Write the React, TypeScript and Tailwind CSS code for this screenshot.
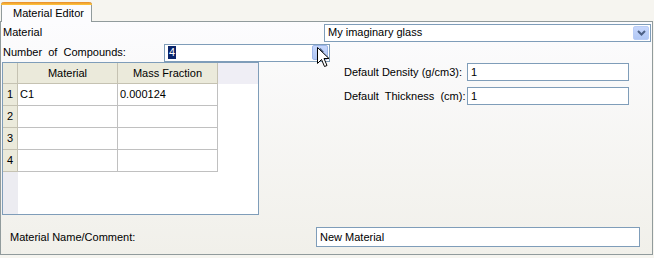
import React from "react";

const font = "font-['Tahoma','Liberation_Sans','DejaVu_Sans',sans-serif] text-[11px] leading-[13px] text-black";

const rows = [
  { n: "1", material: "C1", fraction: "0.000124" },
  { n: "2", material: "", fraction: "" },
  { n: "3", material: "", fraction: "" },
  { n: "4", material: "", fraction: "" },
];

const TextBox: React.FC<{ value: string; className?: string }> = ({ value, className }) => (
  <div
    className={`h-[18px] border border-[#7f9db9] bg-white px-[3px] flex items-center ${className ?? ""}`}
  >
    {value}
  </div>
);

const Cursor = () => (
  <svg width="13" height="21" viewBox="0 0 13 21" className="absolute left-[316px] top-[25px]">
    <path
      d="M0.5 0.5 L0.5 16.5 L4.5 12.5 L7.5 19.5 L10 18.5 L7 11.5 L12 11.5 Z"
      fill="white"
      stroke="black"
      strokeWidth="1"
      strokeLinejoin="miter"
    />
  </svg>
);

export default function App() {
  return (
    <div className={`${font} w-[654px] h-[258px] bg-[#f6f5f0] flex flex-col overflow-hidden`}>
      {/* tab strip */}
      <div className="h-[21px] flex items-end pl-[1px]">
        <div className="relative h-[20px] w-[91px] bg-[#fcfcfe] border-x border-[#919b9c] rounded-t-[3px] flex items-center pl-[11px] pt-[2px] -mb-px z-10">
          <div className="absolute -left-px -right-px top-0 h-[3px] rounded-t-[3px] bg-gradient-to-b from-[#e68b2c] to-[#ffc83c]" />
          Material Editor
        </div>
      </div>

      {/* page */}
      <div className="relative h-[234px] w-[653px] border border-[#919b9c] bg-gradient-to-b from-[#fcfcfe] to-[#f1f0ea] flex flex-col">
        {/* material row */}
        <div className="flex items-center h-[19px] mt-[1px] pl-[2px] pr-[1px]">
          <span>Material</span>
          <div className="ml-auto w-[327px] h-[18px] border border-[#7f9db9] bg-white flex items-center pl-[3px] pr-[1px]">
            <span className="flex-1">My imaginary glass</span>
            <div className="w-[16px] h-[14px] rounded-[2px] bg-gradient-to-b from-[#c7d7fc] to-[#b1c8f5] border border-[#b9cdf6] flex items-center justify-center">
              <svg width="9" height="6" viewBox="0 0 9 6">
                <path d="M1 1 L4.5 4.5 L8 1" fill="none" stroke="#4d6185" strokeWidth="2" />
              </svg>
            </div>
          </div>
        </div>

        {/* compounds row */}
        <div className="flex items-center h-[19px] mt-[1px] pl-[2px]">
          <span className="w-[161px] whitespace-pre">Number  of  Compounds:</span>
          <div className="w-[166px] h-[18px] border border-[#7f9db9] bg-white flex items-center pl-[3px] pr-[1px]">
            <span className="bg-[#0a246a] text-white px-[1px] leading-[13px]">4</span>
            <div className="ml-auto w-[16px] h-[15px] rounded-[2px] bg-gradient-to-b from-[#c7d7fc] to-[#aec5f4] border border-[#9db5e8] flex flex-col items-center justify-center gap-[2px]">
              <svg width="7" height="4" viewBox="0 0 7 4">
                <path d="M0 4 L3.5 0 L7 4 Z" fill="#4d6185" />
              </svg>
              <svg width="7" height="4" viewBox="0 0 7 4">
                <path d="M0 0 L3.5 4 L7 0 Z" fill="#4d6185" />
              </svg>
            </div>
          </div>
        </div>

        {/* grid + defaults */}
        <div className="flex">
          <div className="ml-[1px] w-[257px] h-[153px] border border-[#7f9db9] bg-white flex flex-col overflow-hidden">
            <div className="flex h-[21px] shrink-0">
              <div className="w-[15px] bg-[#ebeadb] border-r border-b border-[#c5c2b2]" />
              <div className="w-[100px] bg-[#ebeadb] border-r border-b border-[#c5c2b2] flex items-center justify-center">
                Material
              </div>
              <div className="w-[100px] bg-[#ebeadb] border-r border-b border-[#c5c2b2] flex items-center justify-center">
                Mass Fraction
              </div>
              <div className="flex-1 bg-[#efeef5]" />
            </div>
            {rows.map((r) => (
              <div key={r.n} className="flex h-[22px] shrink-0">
                <div className="w-[15px] bg-[#ebeadb] border-r border-b border-[#c5c2b2] flex items-center justify-center">
                  {r.n}
                </div>
                <div className="w-[100px] border-r border-b border-[#c0c0c0] flex items-center pl-[2px]">
                  {r.material}
                </div>
                <div className="w-[100px] border-r border-b border-[#c0c0c0] flex items-center pl-[2px]">
                  {r.fraction}
                </div>
              </div>
            ))}
            <div className="flex flex-1">
              <div className="w-[15px] bg-[#ececf1]" />
            </div>
          </div>

          <div className="ml-[85px] mt-[1px] flex flex-col gap-[6px]">
            <div className="flex items-center">
              <span className="w-[123px]">Default Density (g/cm3):</span>
              <TextBox value="1" className="w-[162px]" />
            </div>
            <div className="flex items-center">
              <span className="w-[123px] whitespace-pre">Default  Thickness  (cm):</span>
              <TextBox value="1" className="w-[162px]" />
            </div>
          </div>
        </div>

        {/* name row */}
        <div className="flex items-center mt-[12px] pl-[9px]">
          <span className="w-[306px]">Material Name/Comment:</span>
          <TextBox value="New Material" className="w-[324px] h-[20px]" />
        </div>

        <Cursor />
      </div>
    </div>
  );
}
